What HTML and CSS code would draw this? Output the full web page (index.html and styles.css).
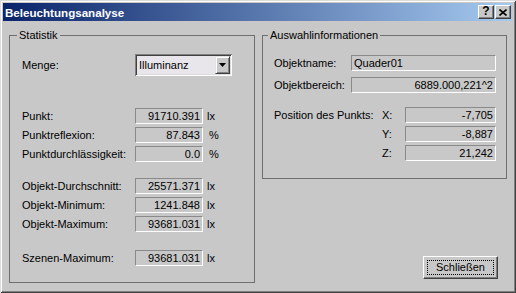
FILE: index.html
```html
<!DOCTYPE html>
<html lang="de">
<head>
  <meta charset="UTF-8">
  <meta name="viewport" content="width=device-width, initial-scale=1.0">
  <title>Beleuchtungsanalyse</title>
  <link rel="stylesheet" href="styles.css">
</head>
<body>

  <div class="window">
    <div class="titlebar">
      <span class="title">Beleuchtungsanalyse</span>
      <div class="caption-buttons">
        <span class="cap-btn help">?</span>
        <span class="cap-btn">
          <svg width="8" height="7" viewBox="0 0 8 7">
            <path d="M0.5 0.5 L7.5 6.5 M7.5 0.5 L0.5 6.5" stroke="#000" stroke-width="1.6" fill="none"/>
          </svg>
        </span>
      </div>
    </div>

    <div class="content">
      <fieldset class="group stats">
        <legend>Statistik</legend>

        <div class="row menge">
          <label>Menge:</label>
          <div class="combo">
            <span class="combo-text">Illuminanz</span>
            <span class="combo-btn">
              <svg width="7" height="4" viewBox="0 0 7 4"><polygon points="0,0 7,0 3.5,4" fill="#000"/></svg>
            </span>
          </div>
        </div>

        <div class="rows punkt">
          <div class="row"><label>Punkt:</label><span class="field">91710.391</span><span class="unit">lx</span></div>
          <div class="row"><label>Punktreflexion:</label><span class="field">87.843</span><span class="unit pct">%</span></div>
          <div class="row"><label>Punktdurchlässigkeit:</label><span class="field">0.0</span><span class="unit pct">%</span></div>
        </div>

        <div class="rows objekt">
          <div class="row"><label>Objekt-Durchschnitt:</label><span class="field">25571.371</span><span class="unit">lx</span></div>
          <div class="row"><label>Objekt-Minimum:</label><span class="field">1241.848</span><span class="unit">lx</span></div>
          <div class="row"><label>Objekt-Maximum:</label><span class="field">93681.031</span><span class="unit">lx</span></div>
        </div>

        <div class="rows szene">
          <div class="row"><label>Szenen-Maximum:</label><span class="field">93681.031</span><span class="unit">lx</span></div>
        </div>
      </fieldset>

      <div class="right-col">
        <fieldset class="group info">
          <legend>Auswahlinformationen</legend>

          <div class="row"><label>Objektname:</label><span class="field wide left">Quader01</span></div>
          <div class="row bereich"><label>Objektbereich:</label><span class="field wide">6889.000,221^2</span></div>

          <div class="pos">
            <label>Position des Punkts:</label><label>X:</label><span class="field">-7,705</span>
            <span></span><label>Y:</label><span class="field">-8,887</span>
            <span></span><label>Z:</label><span class="field">21,242</span>
          </div>
        </fieldset>

        <button type="button" class="btn-close"><span class="focus">Schließen</span></button>
      </div>
    </div>
  </div>

</body>
</html>
```

FILE: styles.css
```css
body {
  margin: 0;
  font-family: "Liberation Sans", Arial, sans-serif;
  font-size: 11px;
  line-height: 13px;
  color: #000;
  background-color: #c8c8c8;
}

.window {
  width: 516px;
  height: 293px;
  box-sizing: border-box;
  padding: 3px 4px 4px 3px;
  background-color: #c8c8c8;
  box-shadow: inset 1px 1px #dcdcdc, inset -1px -1px #404040, inset 2px 2px #fff, inset -2px -2px #808080;
  display: flex;
  flex-direction: column;
}

/* title bar */
.titlebar {
  height: 18px;
  flex-shrink: 0;
  display: flex;
  align-items: center;
  justify-content: space-between;
  padding: 0 1px 0 2px;
  background: linear-gradient(to right, #0a246a, #a6caf0);
}

.title {
  color: #fff;
  font-weight: bold;
  font-size: 11.6px;
}

.caption-buttons {
  display: flex;
  gap: 1px;
}

.cap-btn {
  width: 16px;
  height: 14px;
  box-sizing: border-box;
  display: flex;
  align-items: center;
  justify-content: center;
  background-color: #c8c8c8;
  border-top: 1px solid #fff;
  border-left: 1px solid #fff;
  border-bottom: 1px solid #404040;
  border-right: 1px solid #404040;
  box-shadow: inset -1px -1px #808080;
}

.help {
  font-weight: bold;
  font-size: 12px;
  padding-bottom: 1px;
}

/* body */
.content {
  flex: 1;
  display: flex;
}

.group {
  margin: 8px 0 0 0;
  border: 1px solid #707070;
  box-sizing: border-box;
  min-width: 0;
}

.group legend {
  padding: 0 2px;
  line-height: 13px;
}

.stats {
  margin-left: 6px;
  width: 246px;
  height: 254px;
  padding: 12px 0 0 12px;
}

.stats legend {
  margin-left: -5px;
}

.right-col {
  margin-left: 7px;
  width: 245px;
  display: flex;
  flex-direction: column;
}

.info {
  width: 245px;
  height: 150px;
  padding: 13px 10px 0 11px;
}

.info legend {
  margin-left: -6px;
}

.row {
  display: flex;
  align-items: center;
  height: 16px;
}

.stats .row label {
  width: 113px;
  flex-shrink: 0;
}

.rows {
  display: flex;
  flex-direction: column;
  gap: 3px;
}

.punkt {
  margin-top: 32px;
}

.objekt {
  margin-top: 16px;
}

.szene {
  margin-top: 18px;
}

.field {
  box-sizing: border-box;
  width: 68px;
  height: 16px;
  padding: 0 2px;
  line-height: 14px;
  text-align: right;
  white-space: nowrap;
  border-top: 1px solid #8a8a8a;
  border-left: 1px solid #8a8a8a;
  border-bottom: 1px solid #fff;
  border-right: 1px solid #fff;
}

.unit {
  margin-left: 4px;
}

.unit.pct {
  margin-left: 6px;
}

/* combo box */
.row.menge {
  height: 22px;
}

.combo {
  width: 97px;
  height: 22px;
  box-sizing: border-box;
  display: flex;
  align-items: center;
  background-color: #e8e6ea;
  box-shadow: inset 1px 1px #808080, inset -1px -1px #fff, inset 2px 2px #404040, inset -2px -2px #dcdcdc;
}

.combo-text {
  padding-left: 4px;
}

.combo-btn {
  margin-left: auto;
  margin-right: 2px;
  width: 15px;
  height: 18px;
  box-sizing: border-box;
  display: flex;
  align-items: center;
  justify-content: center;
  background-color: #c8c8c8;
  border-top: 1px solid #e4e4e4;
  border-left: 1px solid #e4e4e4;
  border-bottom: 1px solid #404040;
  border-right: 1px solid #404040;
  box-shadow: inset 1px 1px #fff, inset -1px -1px #808080;
}

/* right group */
.info .row label {
  width: 77px;
  flex-shrink: 0;
}

.field.wide {
  width: 145px;
}

.field.left {
  text-align: left;
}

.bereich {
  margin-top: 6px;
}

.pos {
  margin-top: 14px;
  display: grid;
  grid-template-columns: 108px 23px 91px;
  grid-auto-rows: 16px;
  row-gap: 3px;
  align-items: center;
}

.pos .field {
  width: 91px;
}

/* close button */
.btn-close {
  margin: 77px 9px 0 0;
  align-self: flex-end;
  width: 75px;
  height: 23px;
  padding: 3px;
  box-sizing: border-box;
  font: inherit;
  color: #000;
  background-color: #c8c8c8;
  border-top: 1px solid #fff;
  border-left: 1px solid #fff;
  border-bottom: 1px solid #404040;
  border-right: 1px solid #404040;
  box-shadow: inset -1px -1px #808080;
  cursor: pointer;
}

.focus {
  display: flex;
  align-items: center;
  justify-content: center;
  height: 100%;
  box-sizing: border-box;
  border: 1px dotted #000;
}
```
